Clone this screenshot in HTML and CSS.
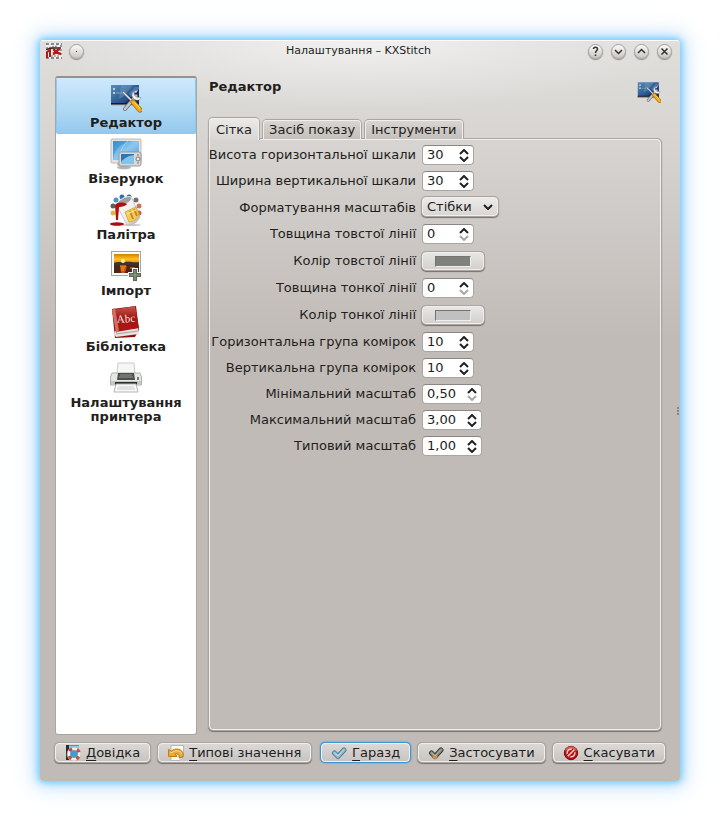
FILE: index.html
```html
<!DOCTYPE html>
<html lang="uk">
<head>
<meta charset="utf-8">
<meta name="viewport" content="width=device-width, initial-scale=1">
<title>Налаштування – KXStitch</title>
<link rel="stylesheet" href="styles.css">
</head>
<body>
<svg class="defs" aria-hidden="true">
  <defs>
    <linearGradient id="blue" x1="0" y1="0" x2="1" y2="1"><stop offset="0" stop-color="#5d8fb8"/><stop offset=".5" stop-color="#2f5c97"/><stop offset="1" stop-color="#162c5e"/></linearGradient>
    <linearGradient id="screen" x1="0" y1="0" x2="1" y2="1"><stop offset="0" stop-color="#3f97d8"/><stop offset=".5" stop-color="#8cc8f0"/><stop offset="1" stop-color="#4a9edb"/></linearGradient>
    <linearGradient id="sunset" x1="0" y1="0" x2="0" y2="1"><stop offset="0" stop-color="#c98200"/><stop offset=".5" stop-color="#ffc21c"/><stop offset="1" stop-color="#e08a10"/></linearGradient>
    <linearGradient id="metal" x1="0" y1="0" x2="1" y2="1"><stop offset="0" stop-color="#fdfdfd"/><stop offset=".6" stop-color="#ececec"/><stop offset="1" stop-color="#a9a9a9"/></linearGradient>
    <linearGradient id="red" x1="0" y1="0" x2="0" y2="1"><stop offset="0" stop-color="#c2594c"/><stop offset=".45" stop-color="#a51717"/><stop offset="1" stop-color="#b01212"/></linearGradient>
    <symbol id="i-editor" viewBox="0 0 32 28">
      <path d="M1 1h28v20H1z" fill="url(#blue)"/>
      <path d="M13 21 29 5v16z" fill="#101f4a" opacity=".65"/>
      <path d="M11 1h12l-9 11-5 3zM19 9l6-6h4v2l-8 8z" fill="#7ba7c9" opacity=".4"/>
      <path d="M1 19h28v2H1z" fill="#151b28"/>
      <path d="M1 21h28" stroke="#aaa"/>
      <path d="M3 4h2v2H3zM3 8h2v2H3z" fill="#b9d3d1"/><path d="M6 9h6" stroke="#7da4b4"/>
      <path d="m15 25 11-13" stroke="#687078" stroke-width="4" stroke-linecap="round"/>
      <path d="m15 25 11-13" stroke="#c5c9cc" stroke-width="2.5" stroke-linecap="round"/>
      <path d="M24 8c0 4 2 6 6 5l1 1c-1 3-6 3-8 0-2-3-1-6 2-7l3-1-2 3z" fill="#eef0f1" stroke="#777f88" stroke-width=".6"/>
      <path d="m13 8 11 11" stroke="#555d66" stroke-width="2.2"/><path d="m13 8 11 11" stroke="#e8e8e8" stroke-width="1.4"/>
      <path d="m23 18 7 8" stroke="#a96700" stroke-width="5" stroke-linecap="round"/>
      <path d="m23 18 7 8" stroke="#f8ae18" stroke-width="3.5" stroke-linecap="round"/>
      <path d="m24 18 6 6" stroke="#ffe07b" stroke-width="1"/>
    </symbol>
    <symbol id="i-pattern" viewBox="0 0 32 32">
      <path d="M7 22h7l1 6H7z" fill="#c9c9c9"/><ellipse cx="14" cy="29.500" rx="7" ry="1.800" fill="#b5b5b5"/>
      <rect x="1" y="1" width="30" height="24" rx="1" fill="#e4e3e1" stroke="#bcbab7"/>
      <rect x="3" y="3" width="26" height="19" fill="url(#screen)"/>
      <path d="M3 22c0-9 8-18 19-19H3z" fill="#2985ca" opacity=".45"/>
      <path d="M18 3c-6 5-8 11-9 19" stroke="#cbeaff" fill="none" opacity=".6"/>
      <rect x="9" y="14" width="22" height="14" rx="2" fill="#d9d8d6" stroke="#999"/>
      <rect x="11" y="16" width="13" height="10" fill="#2777ba"/>
      <path d="M11 24c4-5 8-6 13-7v9H11z" fill="#84c3eb"/>
      <circle cx="28" cy="21" r="2" fill="#eee" stroke="#777"/><path d="M27 17h2M27 25h2" stroke="#777"/>
    </symbol>
    <symbol id="i-palette" viewBox="0 0 32 32">
      <circle cx="6" cy="6" r="2.500" fill="#4299d2"/><circle cx="12" cy="3" r="2.500" fill="#2870b3"/><circle cx="19" cy="3" r="2.500" fill="#2e6ba1"/><circle cx="26" cy="6" r="2.500" fill="#6e706c"/><circle cx="29" cy="12" r="2.500" fill="#c97061"/><circle cx="29" cy="19" r="2.500" fill="#ca604f"/><circle cx="3" cy="12" r="2.500" fill="#58615c"/><circle cx="3" cy="19" r="2.500" fill="#e2b740"/>
      <ellipse cx="21" cy="31" rx="10" ry="1" fill="#c8c8c8"/>
      <path d="M7 12 22 4l8 19c-2 5-7 8-13 8z" fill="url(#metal)" stroke="#b5b5b5" stroke-width=".7"/>
      <path d="M6 12C7 6 17 1 21 3c3 3-7 10-15 9z" fill="#9d9f9f" stroke="#ececec"/>
      <path d="M5 11c3-3 8-3 12-1-1 2-5 3-8 3l-1 13H6z" fill="#b00e12"/>
      <ellipse cx="7" cy="30" rx="7" ry="1.800" fill="#a90c13"/>
      <path d="m15 18 11-5 3 8c-2 4-6 7-10 7z" fill="#f0cd62" stroke="#dfac2d"/><path d="m20 17 3 8M24 15l3 7" stroke="#ca8814" stroke-width="2"/><path d="m17 20 9-4" stroke="#fff1aa"/>
    </symbol>
    <symbol id="i-import" viewBox="0 0 32 32">
      <rect x="1.500" y="1.500" width="29" height="24" fill="#fbfbfa" stroke="#a5a6a1"/>
      <path d="M4 4h25v10H4z" fill="url(#sunset)"/><path d="M4 14h25v9H4z" fill="#492813"/>
      <path d="M4 13c4-2 7 0 11-1s9 1 14 0v3H4z" fill="#3f342d"/><circle cx="13" cy="11" r="2" fill="#fff39b"/>
      <path d="M10 16h7l-2 7h-4z" fill="#cf4c13"/><path d="M10 16h6M11 18h4M11 20h3M20 18h5" stroke="#ff9924"/>
      <path d="M23 19h4v4h4v4h-4v4h-4v-4h-4v-4h4z" fill="#5d6b56" stroke="#f5f6f2" stroke-width="2" paint-order="stroke"/><path d="M25 20v10M20 25h10" stroke="#98a48e"/>
    </symbol>
    <symbol id="i-library" viewBox="0 0 32 32">
      <path d="M2 3 26 0l3 24-4 7-20 1z" fill="#8d1010"/>
      <path d="m5 25 23-3 1 6-23 3-2-3z" fill="#e8e5e1"/><path d="m6 28 22-3" stroke="#aaa29d"/>
      <path d="m2 4 23-4 4 22-23 4z" fill="url(#red)"/><path d="m2 4 3-2 4 23-3 2z" fill="#d56d60"/>
      <text x="7" y="17" transform="rotate(-4 7 17)" class="book-text">Abc</text>
    </symbol>
    <symbol id="i-printer" viewBox="0 0 32 32">
      <path d="M8 1h16l1 11H7z" fill="#f6f6f6" stroke="#ccc"/>
      <path d="M2 11h28l1.500 4v8H.5v-8z" fill="#e6e6e6" stroke="#b0b0b0"/>
      <path d="M8 11h16l1 7H7z" fill="#4c514c"/><path d="M10 13h12M9 15h14" stroke="#929b91"/>
      <path d="M1 19h30v4H1z" fill="#c6c6c6"/><path d="M5 20h22v3H5z" fill="#292c29"/>
      <path d="M6 22h20l2 8H4z" fill="#f8f8f8" stroke="#b5b5b5"/><path d="M8 25h16M7 27h18" stroke="#cacaca"/><path d="M27 15h2v3h-2z" fill="#678663"/>
    </symbol>
    <symbol id="i-help" viewBox="0 0 16 16">
      <path d="M1 0h13v15H1z" fill="#5194c6"/><path d="M1 0h3v15H1z" fill="#292c31"/><path d="M4 1h10v4H4z" fill="#8bc8ec"/>
      <circle cx="9" cy="9" r="5.300" fill="none" stroke="#f4ede2" stroke-width="3.400"/><circle cx="9" cy="9" r="5.300" fill="none" stroke="#cb472c" stroke-width="3.200" stroke-dasharray="3.200 5.120" stroke-dashoffset="-2.500"/><circle cx="9" cy="9" r="3.700" fill="#4599d4"/><circle cx="9" cy="9" r="7" fill="none" stroke="#ad9a8d" stroke-width=".5"/>
    </symbol>
    <symbol id="i-reset" viewBox="0 0 16 16">
      <path d="M3 .5h12.500V12L12 15.500H3z" fill="#f7f7f5" stroke="#bbb8b3"/><path d="M15.500 12H12v3.500" fill="#ddd" stroke="#bbb8b3"/>
      <path d="M.6 4.500 3.500 6C7 3 14 3 15.400 9.500L14.500 12.500H11C11.500 9.500 9.500 8.500 7 9l2 2.500H.6z" fill="#e4ac3b" stroke="#bc7a15"/><path d="M2 7.500h2c3-2.500 8-2.500 10 1.500" stroke="#f9db82" fill="none"/>
    </symbol>
    <symbol id="i-ok" viewBox="0 0 16 16">
      <path d="m3.500 8 3.500 3.500L13 5" stroke="#557b91" stroke-width="5" fill="none" stroke-linejoin="round" stroke-linecap="round"/><path d="m3.500 8 3.500 3.500L13 5" stroke="#8cbace" stroke-width="3.200" fill="none" stroke-linecap="round"/><path d="m3 7.500 4 3.500 6-6.500" stroke="#bfe0e9" fill="none"/>
    </symbol>
    <symbol id="i-apply" viewBox="0 0 16 16">
      <path d="m3.500 8 3.500 3.500L13 5" stroke="#393a34" stroke-width="5" fill="none" stroke-linejoin="round" stroke-linecap="round"/><path d="m3.500 8 3.500 3.500L13 5" stroke="#85877a" stroke-width="3.200" fill="none" stroke-linecap="round"/><path d="m3 7.500 4 3.500 6-6.500" stroke="#bbbcae" fill="none"/><path d="m5 11 2 2 2-2" stroke="#d8924b" stroke-width="2" fill="none"/>
    </symbol>
    <symbol id="i-cancel" viewBox="0 0 16 16">
      <circle cx="8" cy="8" r="6.700" fill="#b61212" stroke="#820909"/><path d="M2 6a6.200 6.200 0 0 1 12 0c-4-2-8-2-12 0z" fill="#d05a51"/><circle cx="8" cy="8" r="3.800" fill="none" stroke="#f4d8d2" stroke-width="1.500"/><path d="m5 11 6-6" stroke="#b61212" stroke-width="4"/><path d="m5 11 6-6" stroke="#f4d8d2" stroke-width="1.500"/>
    </symbol>
    <symbol id="i-app" viewBox="0 0 16 16">
      <path d="M0 0h16v16H0z" fill="#efefed"/><path d="M0 1h16M0 15h16" stroke="#888" stroke-width="2" stroke-dasharray="3 2"/><path d="M15 2v12" stroke="#999" stroke-width="2" stroke-dasharray="2 2"/><path d="M0 5 6 4l5-1M5 13h8" stroke="#777" stroke-dasharray="2 1"/>
      <path d="M0 6.500 6 5h9" stroke="#252525" stroke-width="1.500" fill="none"/><path d="M1 15V9l3-2v7" stroke="#b51616" stroke-width="2" fill="none"/><path d="M7 6c2 1 3 4 8 5M14 6c-3 0-4 4-7 5" stroke="#b51616" stroke-width="2.500" fill="none"/>
    </symbol>
    <symbol id="up" viewBox="0 0 10 6"><path d="m1 5 4-4 4 4" fill="none" stroke="currentColor" stroke-width="2"/></symbol>
    <symbol id="down" viewBox="0 0 10 6"><path d="m1 1 4 4 4-4" fill="none" stroke="currentColor" stroke-width="2"/></symbol>
  </defs>
</svg>

<main class="window">
  <header class="titlebar">
    <svg class="icon16"><use href="#i-app"/></svg>
    <button class="round" aria-label="Меню"><svg viewBox="0 0 13 13"><path d="M6 6h1v1H6z" class="dot"/></svg></button>
    <h1>Налаштування – KXStitch</h1>
    <div class="controls">
      <button class="round" aria-label="Довідка"><svg viewBox="0 0 13 13"><path d="M4.500 4c0-2.500 4-2.500 4 0 0 2-2 1.500-2 4M6.500 9.500V11"/></svg></button>
      <button class="round" aria-label="Мінімізувати"><svg viewBox="0 0 13 13"><path d="m3 5 3.500 3.500L10 5"/></svg></button>
      <button class="round" aria-label="Максимізувати"><svg viewBox="0 0 13 13"><path d="m3 8 3.500-3.500L10 8"/></svg></button>
      <button class="round" aria-label="Закрити"><svg viewBox="0 0 13 13"><path d="m3.500 3.500 6 6M9.500 3.500l-6 6"/></svg></button>
    </div>
  </header>

  <div class="content">
    <nav class="sidebar">
      <a href="#editor" class="item selected" aria-current="page"><svg><use href="#i-editor"/></svg><span>Редактор</span></a>
      <a href="#pattern" class="item"><svg><use href="#i-pattern"/></svg><span>Візерунок</span></a>
      <a href="#palette" class="item"><svg><use href="#i-palette"/></svg><span>Палітра</span></a>
      <a href="#import" class="item"><svg><use href="#i-import"/></svg><span>Імпорт</span></a>
      <a href="#library" class="item"><svg><use href="#i-library"/></svg><span>Бібліотека</span></a>
      <a href="#printer" class="item"><svg><use href="#i-printer"/></svg><span>Налаштування принтера</span></a>
    </nav>

    <section class="page" id="editor">
      <div class="page-head"><h2>Редактор</h2><svg><use href="#i-editor"/></svg></div>
      <div class="tabs" role="tablist">
        <button class="tab active" role="tab" aria-selected="true">Сітка</button>
        <button class="tab" role="tab" aria-selected="false">Засіб показу</button>
        <button class="tab" role="tab" aria-selected="false">Інструменти</button>
      </div>
      <form class="panel" role="tabpanel">
        <label for="f1">Висота горизонтальної шкали</label>
        <div class="spin"><input id="f1" type="text" value="30"><span class="arrows"><button type="button" aria-label="Більше"><svg><use href="#up"/></svg></button><button type="button" aria-label="Менше"><svg><use href="#down"/></svg></button></span></div>
        <label for="f2">Ширина вертикальної шкали</label>
        <div class="spin"><input id="f2" type="text" value="30"><span class="arrows"><button type="button" aria-label="Більше"><svg><use href="#up"/></svg></button><button type="button" aria-label="Менше"><svg><use href="#down"/></svg></button></span></div>
        <label for="f3">Форматування масштабів</label>
        <div class="combo"><select id="f3"><option>Стібки</option></select><svg><use href="#down"/></svg></div>
        <label for="f4">Товщина товстої лінії</label>
        <div class="spin"><input id="f4" type="text" value="0"><span class="arrows"><button type="button" aria-label="Більше"><svg><use href="#up"/></svg></button><button type="button" aria-label="Менше" disabled><svg><use href="#down"/></svg></button></span></div>
        <label for="f5">Колір товстої лінії</label>
        <button id="f5" type="button" class="btn color"><span class="swatch dark"></span></button>
        <label for="f6">Товщина тонкої лінії</label>
        <div class="spin"><input id="f6" type="text" value="0"><span class="arrows"><button type="button" aria-label="Більше"><svg><use href="#up"/></svg></button><button type="button" aria-label="Менше" disabled><svg><use href="#down"/></svg></button></span></div>
        <label for="f7">Колір тонкої лінії</label>
        <button id="f7" type="button" class="btn color"><span class="swatch"></span></button>
        <label for="f8">Горизонтальна група комірок</label>
        <div class="spin"><input id="f8" type="text" value="10"><span class="arrows"><button type="button" aria-label="Більше"><svg><use href="#up"/></svg></button><button type="button" aria-label="Менше"><svg><use href="#down"/></svg></button></span></div>
        <label for="f9">Вертикальна група комірок</label>
        <div class="spin"><input id="f9" type="text" value="10"><span class="arrows"><button type="button" aria-label="Більше"><svg><use href="#up"/></svg></button><button type="button" aria-label="Менше"><svg><use href="#down"/></svg></button></span></div>
        <label for="f10">Мінімальний масштаб</label>
        <div class="spin wide"><input id="f10" type="text" value="0,50"><span class="arrows"><button type="button" aria-label="Більше"><svg><use href="#up"/></svg></button><button type="button" aria-label="Менше" disabled><svg><use href="#down"/></svg></button></span></div>
        <label for="f11">Максимальний масштаб</label>
        <div class="spin wide"><input id="f11" type="text" value="3,00"><span class="arrows"><button type="button" aria-label="Більше"><svg><use href="#up"/></svg></button><button type="button" aria-label="Менше"><svg><use href="#down"/></svg></button></span></div>
        <label for="f12">Типовий масштаб</label>
        <div class="spin wide"><input id="f12" type="text" value="1,00"><span class="arrows"><button type="button" aria-label="Більше"><svg><use href="#up"/></svg></button><button type="button" aria-label="Менше"><svg><use href="#down"/></svg></button></span></div>
      </form>
    </section>
  </div>

  <footer class="actions">
    <button class="btn"><svg class="icon16"><use href="#i-help"/></svg><span><u>Д</u>овідка</span></button>
    <button class="btn"><svg class="icon16"><use href="#i-reset"/></svg><span><u>Т</u>ипові значення</span></button>
    <button class="btn default push"><svg class="icon16"><use href="#i-ok"/></svg><span><u>Г</u>аразд</span></button>
    <button class="btn"><svg class="icon16"><use href="#i-apply"/></svg><span><u>З</u>астосувати</span></button>
    <button class="btn"><svg class="icon16"><use href="#i-cancel"/></svg><span><u>С</u>касувати</span></button>
  </footer>
  <span class="grip"></span>
</main>
</body>
</html>
```
FILE: styles.css
```css
* { box-sizing: border-box; }

body {
  margin: 0;
  padding: 40px;
  min-height: 100vh;
  display: flex;
  background: #fff;
  color: #221e1c;
  font: 13px/16px "DejaVu Sans", sans-serif;
}

button, input, select { font: inherit; color: inherit; margin: 0; }
h1, h2 { margin: 0; }
svg { display: block; flex: none; }
.defs { position: absolute; width: 0; height: 0; }
.book-text { font: 11px "Liberation Serif", serif; fill: #f8e4df; }
.icon16 { width: 16px; height: 16px; }

.window {
  position: relative;
  flex: 1;
  min-width: 0;
  display: flex;
  flex-direction: column;
  padding: 0 14px 17px;
  border: 1px solid transparent;
  border-top-color: #fafafa;
  border-radius: 4px;
  background:
    radial-gradient(ellipse 330px 68px at 50% 0, #f2f1f0 0%, rgba(236, 235, 234, 0.6) 50%, rgba(224, 223, 220, 0) 100%) padding-box,
    linear-gradient(#dfdedb 0, #dad8d5 70px, #c1bbb7 300px) border-box;
  box-shadow: 0 0 6px 1px #6ccbfb, 0 0 14px 2px #a4dafd, 0 0 26px 8px #e2eefc;
}

.titlebar {
  display: grid;
  grid-template-columns: 16px 16px 1fr auto;
  align-items: center;
  column-gap: 7px;
  height: 20px;
  margin: 0 -8px 0 -9px;
}
.titlebar h1 { font-size: 11px; font-weight: 400; line-height: 14px; text-align: center; padding-left: 44px; }
.controls { display: flex; gap: 8px; margin-right: 1px; }
.round {
  width: 15px;
  height: 15px;
  padding: 0;
  border: 1px solid #a5a19d;
  border-radius: 50%;
  background: linear-gradient(#fafafa, #c9c6c3);
  box-shadow: 0 1px 1px #8d8986;
}
.round svg { width: 13px; height: 13px; fill: none; stroke: #333; stroke-width: 1.5; }
.round .dot { fill: #333; stroke: none; }

.content { flex: 1; display: flex; gap: 12px; margin-top: 15px; }

.sidebar {
  width: 142px;
  flex: none;
  border: 1px solid #aaa5a1;
  border-top: 2px solid #96918d;
  border-radius: 3px;
  background: #fff;
}
.item {
  display: flex;
  flex-direction: column;
  align-items: center;
  min-height: 56px;
  padding: 4px 8px 2px;
  color: #221e1c;
  font-weight: 700;
  line-height: 14px;
  text-align: center;
  text-decoration: none;
}
.item svg { width: 32px; height: 32px; margin-bottom: 2px; }
.item.selected {
  border: 1px solid #8cc8f4;
  border-top: 0;
  border-radius: 2px;
  background: linear-gradient(#cfe9fd, #aed8f3 60%, #95c8ee);
}

.page { flex: 1; min-width: 0; display: flex; flex-direction: column; margin: 0 4px 5px 0; }
.page-head { display: flex; justify-content: space-between; height: 42px; padding-top: 3px; }
.page-head h2 { font-size: 13px; line-height: 16px; }
.page-head svg { width: 24px; height: 22px; margin-top: 2px; }

.tabs { display: flex; align-items: flex-end; gap: 4px; height: 21px; }
.tab {
  height: 19px;
  padding: 0 5px;
  border: 1px solid #f0efee;
  border-bottom: 0;
  border-radius: 4px 4px 0 0;
  background: linear-gradient(#d8d5d2, #c4bfbb);
  box-shadow: 0 0 1px 1px #a6a19d;
  clip-path: inset(-2px -2px 0);
}
.tab.active {
  z-index: 1;
  height: 22px;
  padding: 0 6px;
  margin-bottom: -1px;
  background: linear-gradient(#ebeae8, #d9d6d3);
}

.panel {
  flex: 1;
  display: grid;
  grid-template-columns: 207px 1fr;
  align-content: start;
  align-items: center;
  justify-items: start;
  gap: 6px 5px;
  padding: 5px 0;
  border: 1px solid #f0efed;
  border-radius: 0 4px 4px 4px;
  box-shadow: 0 0 0 1px #aaa5a1, 0 1px 1px 1px #77716d;
}
.panel label { justify-self: end; padding-right: 1px; line-height: 16px; white-space: nowrap; }

.spin {
  display: flex;
  align-items: center;
  width: 52px;
  height: 20px;
  padding: 0 4px;
  border: 1px solid #aaa5a1;
  border-top-color: #8b8682;
  border-radius: 4px;
  background: #fff;
}
.spin.wide { width: 60px; }
.spin input { flex: 1; width: 0; min-width: 0; height: 16px; padding: 0; border: 0; outline: 0; background: transparent; }
.arrows { display: flex; flex-direction: column; gap: 1px; }
.arrows button { padding: 0; border: 0; background: none; color: #222; }
.arrows button:disabled { color: #aaa5a2; }
.arrows svg { width: 10px; height: 6px; }

.combo { position: relative; height: 21px; }
.combo select {
  appearance: none;
  width: 76px;
  height: 19px;
  padding: 0 20px 0 4px;
  border: 1px solid #f0efee;
  border-radius: 4px;
  background: linear-gradient(#ecebe9, #d9d6d4);
  box-shadow: 0 0 0 1px #aaa5a1, 0 1px 1px 1px #77716d;
}
.combo svg { position: absolute; right: 5px; top: 7px; width: 10px; height: 6px; pointer-events: none; }

.btn {
  display: flex;
  align-items: center;
  gap: 5px;
  height: 19px;
  padding: 0 9px;
  border: 1px solid #f0efed;
  border-radius: 4px;
  background: linear-gradient(#dbd8d6, #c8c4c1);
  box-shadow: 0 0 0 1px #aaa5a1, 0 1px 1px 1px #77716d;
  white-space: nowrap;
}
.btn u { text-underline-offset: 3px; text-decoration-skip-ink: none; }
.btn.default { box-shadow: 0 0 0 1px #3b97d4, 0 0 2px 1px #3b97d4; }
.btn.color { width: 62px; height: 18px; margin: 2px 0; justify-content: center; background: linear-gradient(#e8e7e5, #d3d0cd); }
.swatch { width: 36px; height: 11px; border: 1px solid #77736f; border-right-color: #eee; border-bottom-color: #eee; background: #c0c0c0; }
.swatch.dark { background: #80807d; }

.actions { display: flex; gap: 8px; margin-top: 8px; padding-bottom: 1px; }
.push { margin-left: auto; }

.grip { position: absolute; right: 0; top: 50%; width: 2px; height: 8px; margin-top: -4px; border-left: 2px dotted #8b8581; }
```
